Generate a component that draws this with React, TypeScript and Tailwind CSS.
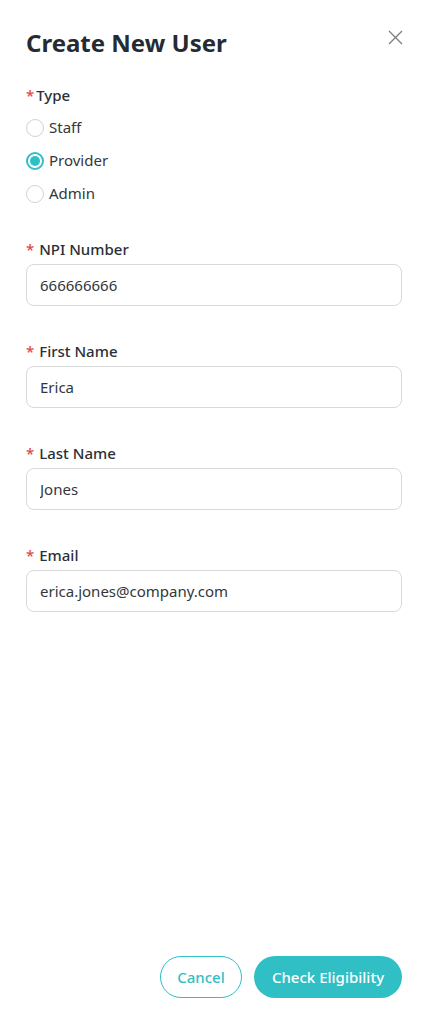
import React, { useState } from 'react';

type UserType = 'Staff' | 'Provider' | 'Admin';

const TYPES: UserType[] = ['Staff', 'Provider', 'Admin'];

const Required = () => <span className="text-[#e0474c] mr-[5px] text-[15px]">*</span>;

const Field: React.FC<{ label: string; value: string; onChange: (v: string) => void }> = ({ label, value, onChange }) => (
  <div className="mb-[34px]">
    <label className="flex items-center h-[22px] text-[15px] font-medium text-[#2b3036] leading-[22px]">
      <Required />
      {label}
    </label>
    <input
      value={value}
      onChange={(e) => onChange(e.target.value)}
      className="mt-[4px] w-full h-[42px] rounded-[8px] border border-[#d9d9d9] px-[13px] text-[15px] text-[#33373c] outline-none focus:border-[#2fbfc5]"
    />
  </div>
);

const App: React.FC = () => {
  const [type, setType] = useState<UserType>('Provider');
  const [npi, setNpi] = useState('666666666');
  const [firstName, setFirstName] = useState('Erica');
  const [lastName, setLastName] = useState('Jones');
  const [email, setEmail] = useState('erica.jones@company.com');

  return (
    <div className="min-h-[1024px] h-screen bg-white flex flex-col justify-between px-[26px] pb-[26px] font-['Noto_Sans',sans-serif]">
      <div>
        <div className="flex items-start justify-between pt-[27px]">
          <h1 className="text-[24px] leading-[32px] font-bold text-[#252b33]">Create New User</h1>
          <button className="mt-[1px] -mr-[2px] w-[18px] h-[18px] flex items-center justify-center text-[#7a7d80]">
            <svg width="15" height="15" viewBox="0 0 15 15" fill="none" stroke="currentColor" strokeWidth="1.3">
              <path d="M1 1L14 14M14 1L1 14" />
            </svg>
          </button>
        </div>

        <div className="mt-[25px]">
          <div className="flex items-center h-[22px] text-[15px] font-medium text-[#2b3036] leading-[22px]">
            <span className="text-[#e0474c] mr-[2px] text-[15px]">*</span>
            Type
          </div>
          <div className="mt-[5px] flex flex-col">
            {TYPES.map((t) => {
              const selected = t === type;
              return (
                <label key={t} className="h-[33px] flex items-center gap-[5px] cursor-pointer" onClick={() => setType(t)}>
                  <span
                    className={
                      selected
                        ? 'w-[18px] h-[18px] rounded-full border-2 border-[#2fbfc5] flex items-center justify-center'
                        : 'w-[18px] h-[18px] rounded-full border-[1.5px] border-[#d2d2d2]'
                    }
                  >
                    {selected && <span className="w-[10px] h-[10px] rounded-full bg-[#2fbfc5]" />}
                  </span>
                  <span className="text-[15px] text-[#33373c]">{t}</span>
                </label>
              );
            })}
          </div>
        </div>

        <div className="mt-[28px]">
          <Field label="NPI Number" value={npi} onChange={setNpi} />
          <Field label="First Name" value={firstName} onChange={setFirstName} />
          <Field label="Last Name" value={lastName} onChange={setLastName} />
          <Field label="Email" value={email} onChange={setEmail} />
        </div>
      </div>

      <div className="flex justify-end gap-[12px]">
        <button className="h-[42px] w-[82px] rounded-full border border-[#2fbfc5] text-[#2fbfc5] text-[15px] font-medium bg-white">
          Cancel
        </button>
        <button className="h-[42px] w-[148px] rounded-full bg-[#2fbfc5] text-white text-[15px] font-medium">
          Check Eligibility
        </button>
      </div>
    </div>
  );
};

export default App;
